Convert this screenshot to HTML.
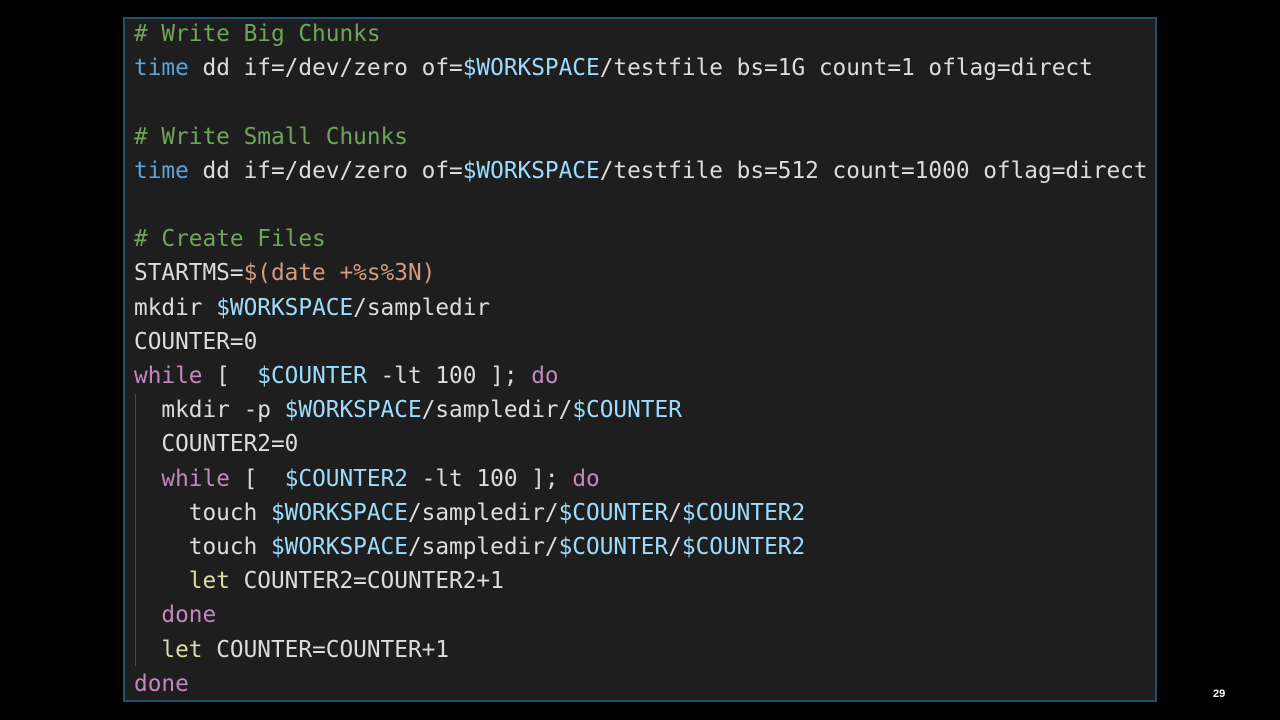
<!DOCTYPE html>
<html><head><meta charset="utf-8"><style>
html,body{margin:0;padding:0;background:#000;width:1280px;height:720px;overflow:hidden;position:relative}
.box{position:absolute;left:123px;top:17px;width:1030px;height:681px;border:2px solid #1b5276;background:#1e1e1e;overflow:hidden}
pre{position:absolute;left:9px;top:-2px;margin:0;font-family:"DejaVu Sans Mono","Liberation Mono",monospace;font-size:22.75px;line-height:34.2px;color:#dcdcdc}
.c{color:#6fa55a}.k{color:#5aa3dd}.v{color:#9cdcfe}.s{color:#d69a7e}.p{color:#c586c0}.f{color:#dcdcaa}
.g{position:absolute;left:10px;top:375px;width:1px;height:272px;background:#4a4a4a}
.n{position:absolute;left:1213px;top:688px;color:#fff;font:bold 11px "Liberation Sans",sans-serif}
</style></head><body>
<div class="box"><div class="g"></div><pre><span class="c"># Write Big Chunks</span>
<span class="k">time</span> dd if=/dev/zero of=<span class="v">$WORKSPACE</span>/testfile bs=1G count=1 oflag=direct

<span class="c"># Write Small Chunks</span>
<span class="k">time</span> dd if=/dev/zero of=<span class="v">$WORKSPACE</span>/testfile bs=512 count=1000 oflag=direct

<span class="c"># Create Files</span>
STARTMS=<span class="s">$(date +%s%3N)</span>
mkdir <span class="v">$WORKSPACE</span>/sampledir
COUNTER=0
<span class="p">while</span> [  <span class="v">$COUNTER</span> -lt 100 ]; <span class="p">do</span>
  mkdir -p <span class="v">$WORKSPACE</span>/sampledir/<span class="v">$COUNTER</span>
  COUNTER2=0
  <span class="p">while</span> [  <span class="v">$COUNTER2</span> -lt 100 ]; <span class="p">do</span>
    touch <span class="v">$WORKSPACE</span>/sampledir/<span class="v">$COUNTER</span>/<span class="v">$COUNTER2</span>
    touch <span class="v">$WORKSPACE</span>/sampledir/<span class="v">$COUNTER</span>/<span class="v">$COUNTER2</span>
    <span class="f">let</span> COUNTER2=COUNTER2+1
  <span class="p">done</span>
  <span class="f">let</span> COUNTER=COUNTER+1
<span class="p">done</span></pre></div>
<div class="n">29</div>
</body></html>
